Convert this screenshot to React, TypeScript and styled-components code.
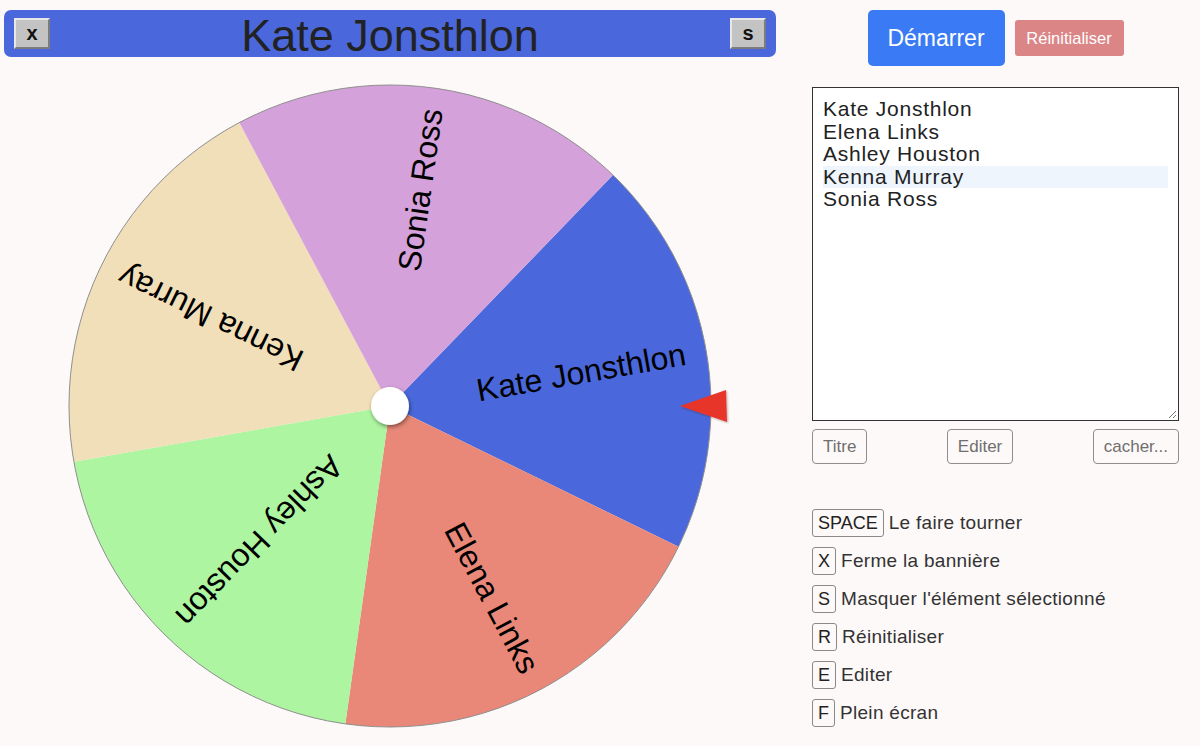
import React from 'react';
import styled, { createGlobalStyle } from 'styled-components';

const GlobalStyle = createGlobalStyle`
  html, body {
    margin: 0;
    padding: 0;
    background: #fdf9f8;
  }
  body {
    font-family: 'Liberation Sans', Arial, sans-serif;
    color: #222;
  }
`;

interface Segment {
  name: string;
  color: string;
}

const segments: Segment[] = [
  { name: 'Kate Jonsthlon', color: '#4a68db' },
  { name: 'Elena Links', color: '#e98878' },
  { name: 'Ashley Houston', color: '#adf5a0' },
  { name: 'Kenna Murray', color: '#f1dfb9' },
  { name: 'Sonia Ross', color: '#d4a1da' },
];

const shortcuts = [
  { key: 'SPACE', label: 'Le faire tourner' },
  { key: 'X', label: 'Ferme la bannière' },
  { key: 'S', label: "Masquer l'élément sélectionné" },
  { key: 'R', label: 'Réinitialiser' },
  { key: 'E', label: 'Editer' },
  { key: 'F', label: 'Plein écran' },
];

const CX = 386;
const CY = 330;
const R = 321;
const START = -46;

function point(angle: number, radius: number) {
  const rad = (angle * Math.PI) / 180;
  return [CX + radius * Math.cos(rad), CY + radius * Math.sin(rad)];
}

function Wheel() {
  const step = 360 / segments.length;
  return (
    <WheelSvg width={772} height={664} viewBox="0 0 772 664">
      <defs>
        <filter id="hubShadow" x="-50%" y="-50%" width="200%" height="200%">
          <feDropShadow dx="1" dy="2" stdDeviation="2" floodOpacity="0.45" />
        </filter>
        <filter id="pointerShadow" x="-50%" y="-50%" width="200%" height="200%">
          <feDropShadow dx="1" dy="1" stdDeviation="1" floodOpacity="0.3" />
        </filter>
      </defs>
      {segments.map((s, i) => {
        const a0 = START + i * step;
        const a1 = a0 + step;
        const [x0, y0] = point(a0, R);
        const [x1, y1] = point(a1, R);
        return (
          <path
            key={s.name}
            d={`M ${CX} ${CY} L ${x0} ${y0} A ${R} ${R} 0 0 1 ${x1} ${y1} Z`}
            fill={s.color}
          />
        );
      })}
      <circle cx={CX} cy={CY} r={R} fill="none" stroke="#8f8f8f" strokeWidth={1} />
      {segments.map((s, i) => {
        const mid = START + i * step + step / 2;
        return (
          <text
            key={s.name}
            x={CX + 300}
            y={CY}
            transform={`rotate(${mid} ${CX} ${CY})`}
            textAnchor="end"
            dominantBaseline="central"
            fontSize={32}
            fontFamily="'Liberation Sans', Arial, sans-serif"
            fill="#000"
          >
            {s.name}
          </text>
        );
      })}
      <circle cx={CX} cy={CY} r={19} fill="#fff" filter="url(#hubShadow)" />
      <polygon
        points="676,330 722,314 723,346"
        fill="#e8352a"
        filter="url(#pointerShadow)"
      />
    </WheelSvg>
  );
}

export default function App() {
  return (
    <Page>
      <GlobalStyle />
      <LeftColumn>
        <Banner>
          <BevelButton>x</BevelButton>
          <BannerTitle>Kate Jonsthlon</BannerTitle>
          <BevelButton>s</BevelButton>
        </Banner>
        <Wheel />
      </LeftColumn>
      <RightColumn>
        <ActionRow>
          <StartButton>Démarrer</StartButton>
          <ResetButton>Réinitialiser</ResetButton>
        </ActionRow>
        <ListBox>
          {segments.map((s, i) => (
            <ListLine key={s.name} active={i === 3}>
              {s.name}
            </ListLine>
          ))}
          <Grip width={10} height={10} viewBox="0 0 10 10">
            <path d="M9 2 L2 9 M9 6 L6 9" stroke="#777" strokeWidth={1} />
          </Grip>
        </ListBox>
        <ToolRow>
          <GhostButton>Titre</GhostButton>
          <GhostButton>Editer</GhostButton>
          <GhostButton>cacher...</GhostButton>
        </ToolRow>
        <ShortcutList>
          {shortcuts.map((s) => (
            <ShortcutRow key={s.key}>
              <Key>{s.key}</Key>
              <ShortcutLabel>{s.label}</ShortcutLabel>
            </ShortcutRow>
          ))}
        </ShortcutList>
      </RightColumn>
    </Page>
  );
}

const Page = styled.div`
  display: flex;
  gap: 36px;
  padding: 10px 21px 0 4px;
  height: 746px;
  box-sizing: border-box;
  overflow: hidden;
`;

const LeftColumn = styled.div`
  width: 772px;
  display: flex;
  flex-direction: column;
`;

const Banner = styled.div`
  height: 47px;
  background: #4a68db;
  border-radius: 7px;
  display: flex;
  align-items: center;
  justify-content: space-between;
  padding: 0 10px;
  box-sizing: border-box;
`;

const BannerTitle = styled.div`
  font-size: 45px;
  line-height: 47px;
  color: #222;
  padding-top: 4px;
`;

const BevelButton = styled.div`
  width: 36px;
  height: 31px;
  box-sizing: border-box;
  background: #c3c3c3;
  border-top: 2px solid #e8e8e8;
  border-left: 2px solid #e8e8e8;
  border-bottom: 2px solid #7c7c7c;
  border-right: 2px solid #7c7c7c;
  display: flex;
  align-items: center;
  justify-content: center;
  font-weight: bold;
  font-size: 20px;
  color: #111;
`;

const WheelSvg = styled.svg`
  display: block;
  margin-top: 19px;
`;

const RightColumn = styled.div`
  width: 367px;
  display: flex;
  flex-direction: column;
`;

const ActionRow = styled.div`
  display: flex;
  justify-content: center;
  align-items: center;
  gap: 10px;
`;

const StartButton = styled.div`
  width: 137px;
  height: 56px;
  border-radius: 5px;
  background: #3a7bf5;
  color: #fff;
  font-size: 23px;
  display: flex;
  align-items: center;
  justify-content: center;
`;

const ResetButton = styled.div`
  width: 109px;
  height: 36px;
  border-radius: 3px;
  background: #dc8587;
  color: #fff;
  font-size: 16.5px;
  display: flex;
  align-items: center;
  justify-content: center;
`;

const ListBox = styled.div`
  position: relative;
  margin-top: 21px;
  height: 334px;
  box-sizing: border-box;
  border: 1px solid #333;
  background: #fff;
  padding: 10px;
`;

const ListLine = styled.div<{ active?: boolean }>`
  font-size: 21px;
  letter-spacing: 0.75px;
  line-height: 22.5px;
  color: #222;
  background: ${({ active }) => (active ? '#eef5fc' : 'transparent')};
`;

const Grip = styled.svg`
  position: absolute;
  right: 1px;
  bottom: 1px;
`;

const ToolRow = styled.div`
  display: flex;
  justify-content: space-between;
  margin-top: 8px;
`;

const GhostButton = styled.div`
  height: 35px;
  box-sizing: border-box;
  padding: 0 10px;
  border: 1px solid #8e8e8e;
  border-radius: 4px;
  color: #6f6f6f;
  font-size: 17px;
  display: flex;
  align-items: center;
`;

const ShortcutList = styled.div`
  margin-top: 45px;
  display: flex;
  flex-direction: column;
  gap: 10px;
`;

const ShortcutRow = styled.div`
  display: flex;
  align-items: center;
`;

const Key = styled.div`
  height: 28px;
  box-sizing: border-box;
  min-width: 23px;
  padding: 0 5px;
  border: 1px solid #8a8a8a;
  border-radius: 3px;
  font-size: 18px;
  color: #222;
  display: flex;
  align-items: center;
  justify-content: center;
  margin-right: 5px;
`;

const ShortcutLabel = styled.div`
  font-size: 19px;
  letter-spacing: 0.3px;
  color: #333;
`;
